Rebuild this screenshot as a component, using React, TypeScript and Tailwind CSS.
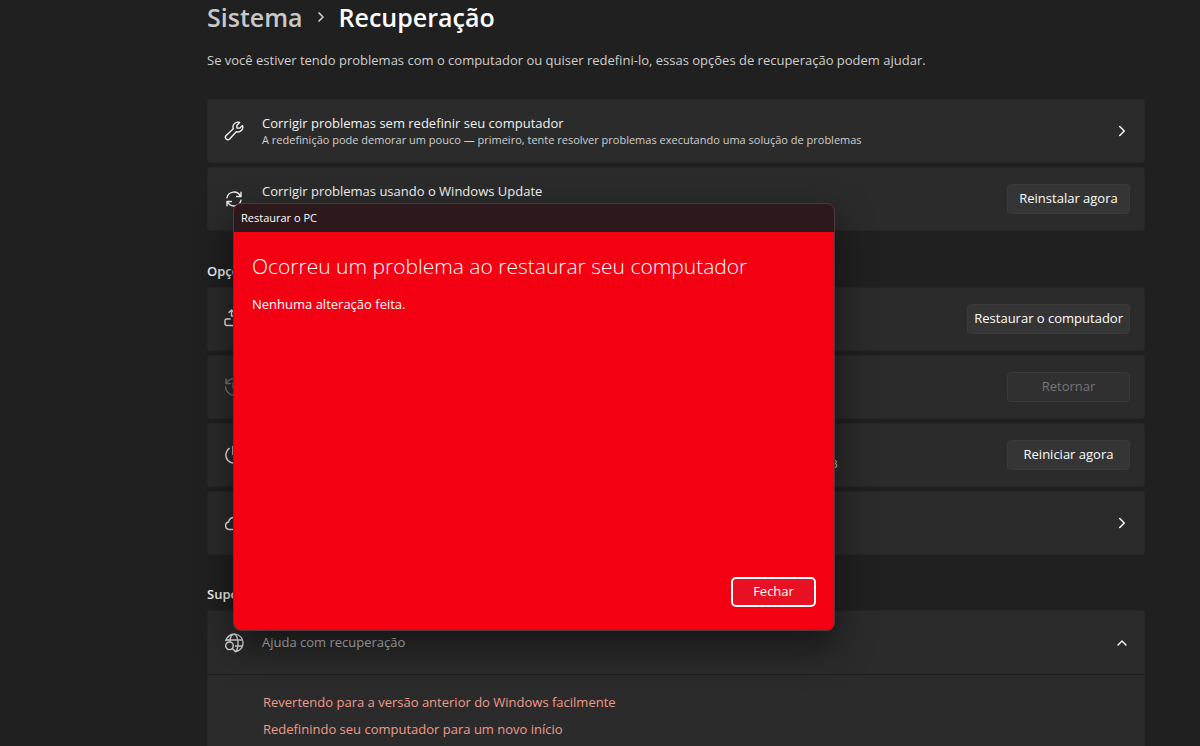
import React from 'react';
import { ChevronRight, ChevronUp } from 'lucide-react';

type RowProps = {
  icon: React.ReactNode;
  title: string;
  detail?: string;
  disabled?: boolean;
  children: React.ReactNode;
};

const SettingRow: React.FC<RowProps> = ({ icon, title, detail, disabled, children }) => (
  <li
    className={`flex h-16 items-center rounded-[3px] border border-[#262626] bg-[#2b2b2b] pr-3.5 pl-4 ${
      disabled ? 'text-[#757575]' : 'text-[#f2f2f2]'
    }`}
  >
    <span className="mr-[18px] flex size-5 shrink-0 items-center justify-center">{icon}</span>
    <div className="min-w-0 flex-1 whitespace-nowrap">
      <p className="text-[13px] leading-[18px]">{title}</p>
      {detail && <p className="text-[11px] leading-4 text-[#cfcfcf]">{detail}</p>}
    </div>
    {children}
  </li>
);

const ActionButton: React.FC<{ label: string; disabled?: boolean }> = ({ label, disabled }) => (
  <button
    type="button"
    disabled={disabled}
    className="h-[30px] min-w-[123px] rounded border border-[#3a3a3a] bg-[#353535] px-1.5 text-[13px] whitespace-nowrap text-white disabled:bg-[#303030] disabled:text-[#757575]"
  >
    {label}
  </button>
);

const OpenButton: React.FC<{ label: string }> = ({ label }) => (
  <button type="button" aria-label={label} className="flex size-4 items-center justify-center text-white">
    <ChevronRight size={18} strokeWidth={2} className="shrink-0" />
  </button>
);

const strokeProps = {
  width: 20,
  height: 20,
  viewBox: '0 0 20 20',
  fill: 'none',
  stroke: 'currentColor',
  strokeWidth: 1.4,
  strokeLinecap: 'round' as const,
  strokeLinejoin: 'round' as const,
};

const WrenchIcon = () => (
  <svg {...strokeProps}>
    <path d="M15.6 1.5 12.9 4.2v2.9h2.9l2.7-2.7a4.9 4.9 0 0 1-6.2 6.3L5.6 17.9a2.3 2.3 0 0 1-3.4-3.4L9.3 7.8A4.9 4.9 0 0 1 15.6 1.5Z" />
  </svg>
);

const SyncIcon = () => (
  <svg {...strokeProps}>
    <path d="M3 8.8A7.1 7.1 0 0 1 16.4 7.2M17 3.2v4.3h-4.3M17 11.2A7.1 7.1 0 0 1 3.6 12.8M3 16.8v-4.3h4.3" />
  </svg>
);

const ResetIcon = () => (
  <svg {...strokeProps}>
    <path d="M12 10h5.2c1.1 0 1.8.7 1.8 1.7v3.1c0 1-.7 1.7-1.8 1.7H2.8c-1.1 0-1.8-.7-1.8-1.7v-3.1C1 10.7 1.7 10 2.8 10h3.4M7.5 7V1M5 3.5 7.5 1 10 3.5M7.5 7H10v5" />
  </svg>
);

const HistoryIcon = () => (
  <svg {...strokeProps}>
    <path d="M2 2v4.5h4.5M2.5 6.2A8.3 8.3 0 1 1 1.7 10M9 6v5h4.5" />
  </svg>
);

const PowerIcon = () => (
  <svg {...strokeProps}>
    <path d="M5.2 3.4a8.2 8.2 0 1 0 9.6 0M9 1.5v8" />
  </svg>
);

const CloudIcon = () => (
  <svg {...strokeProps}>
    <path d="M5 16.5a3.8 3.8 0 0 1-.4-7.5 5.5 5.5 0 0 1 10.8 0 3.8 3.8 0 0 1-.4 7.5Z" />
  </svg>
);

const GlobeSearchIcon = () => (
  <svg {...strokeProps} className="text-[#e2e2e2]">
    <path d="M1.8 7.5A8.8 8.8 0 1 1 12 18.5M2 7h16.2M11.5 13h6.8M6 8c.3-4 2-6.8 4-6.8S14 5 14 10s-1.3 7.8-2.6 8.6" />
    <circle cx="5.5" cy="12.8" r="3.8" />
    <path d="m8.3 15.6 3 3" />
  </svg>
);

const RestoreDialog = () => (
  <div
    role="dialog"
    aria-labelledby="dialog-title"
    className="absolute top-[203px] left-[233px] flex h-[428px] w-[602px] flex-col overflow-hidden rounded-lg border border-[#51383b] bg-[#f40013] text-white shadow-[0_16px_36px_rgba(0,0,0,0.5)]"
  >
    <header className="h-7 bg-[#2b191c] px-[7px] text-[11px] leading-7">Restaurar o PC</header>
    <div className="flex flex-1 flex-col items-start px-[18px] pt-[18px] pb-[23px]">
      <h2 id="dialog-title" className="text-[21px] leading-8 font-light">
        Ocorreu um problema ao restaurar seu computador
      </h2>
      <p className="mt-3 text-[13px] leading-5">Nenhuma alteração feita.</p>
      <button
        type="button"
        className="mt-auto h-[30px] w-[85px] self-end rounded-[5px] border-2 border-white bg-[#e81123] text-[13px]"
      >
        Fechar
      </button>
    </div>
  </div>
);

export default function App() {
  return (
    <div className="relative h-screen overflow-hidden bg-[#202020] font-['Open_Sans',sans-serif] text-[#f2f2f2]">
      <main className="pr-[55px] pl-[207px]">
        <h1 className="flex items-center text-[25px] leading-[34px] font-semibold">
          <a href="#sistema" className="text-[#c8c8c8]">Sistema</a>
          <ChevronRight size={16} strokeWidth={2.5} className="mx-2.5 text-[#cfcfcf]" />
          <span className="text-white">Recuperação</span>
        </h1>
        <p className="mt-[17px] text-[13px] leading-[18px] text-[#cfcfcf]">
          Se você estiver tendo problemas com o computador ou quiser redefini-lo, essas opções de recuperação podem ajudar.
        </p>

        <ul className="mt-[30px] space-y-1">
          <SettingRow
            icon={<WrenchIcon />}
            title="Corrigir problemas sem redefinir seu computador"
            detail="A redefinição pode demorar um pouco — primeiro, tente resolver problemas executando uma solução de problemas"
          >
            <OpenButton label="Abrir solução de problemas" />
          </SettingRow>
          <SettingRow
            icon={<SyncIcon />}
            title="Corrigir problemas usando o Windows Update"
            detail="Reinstale sua versão atual do Windows"
          >
            <ActionButton label="Reinstalar agora" />
          </SettingRow>
        </ul>

        <h2 className="mt-[31px] text-[13px] leading-[18px] font-semibold">Opções de recuperação</h2>
        <ul className="mt-[7px] space-y-1">
          <SettingRow icon={<ResetIcon />} title="Restaurar o PC" detail="Opte por manter ou remover seus arquivos pessoais">
            <ActionButton label="Restaurar o computador" />
          </SettingRow>
          <SettingRow icon={<HistoryIcon />} title="Voltar" disabled>
            <ActionButton label="Retornar" disabled />
          </SettingRow>
          <SettingRow
            icon={<PowerIcon />}
            title="Inicialização avançada"
            detail="Reinicie o dispositivo para alterar as configurações de inicialização, incluindo iniciar de um disco ou unidade USB"
          >
            <ActionButton label="Reiniciar agora" />
          </SettingRow>
          <SettingRow icon={<CloudIcon />} title="Recuperação rápida do computador">
            <OpenButton label="Abrir recuperação rápida" />
          </SettingRow>
        </ul>

        <h2 className="mt-[30px] text-[13px] leading-[18px] font-semibold">Suporte relacionado</h2>
        <section className="mt-[7px] rounded-[3px] border border-[#262626] bg-[#2b2b2b]">
          <button type="button" className="flex h-16 w-full items-center border-b border-[#1f1f1f] pr-3.5 pl-4 text-left">
            <GlobeSearchIcon />
            <span className="ml-[18px] flex-1 text-[13px] text-[#c4c4c4]">Ajuda com recuperação</span>
            <ChevronUp size={16} strokeWidth={2} className="text-white" />
          </button>
          <div className="flex flex-col items-start gap-[9px] py-[18px] pl-[55px] text-[13px] leading-[18px] text-[#f09a8c]">
            <a href="#versao-anterior">Revertendo para a versão anterior do Windows facilmente</a>
            <a href="#novo-inicio">Redefinindo seu computador para um novo início</a>
          </div>
        </section>
      </main>

      <RestoreDialog />
    </div>
  );
}
